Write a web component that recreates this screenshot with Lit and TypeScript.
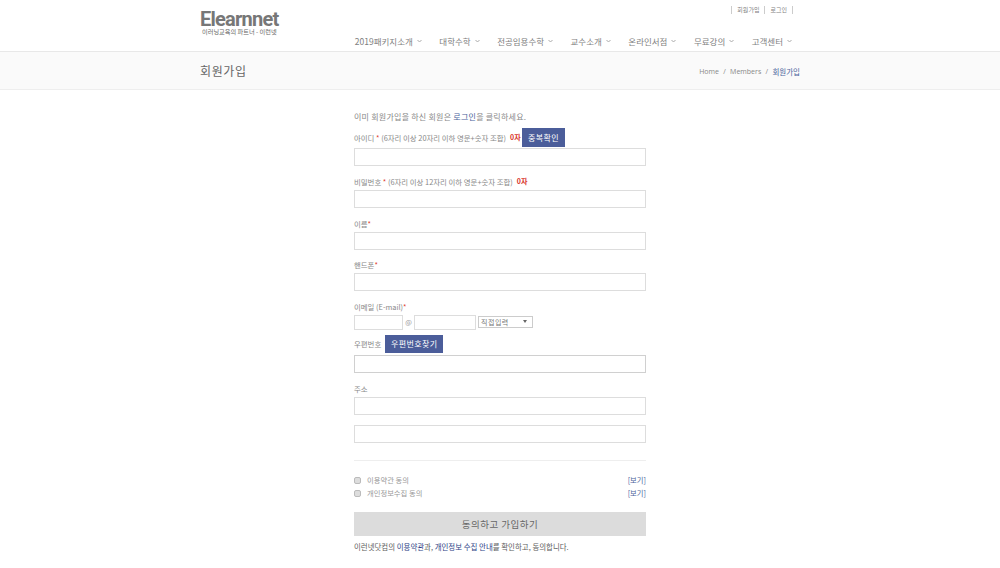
import { LitElement, html, css } from "lit";
import { customElement } from "lit/decorators.js";

@customElement("app-root")
export class AppRoot extends LitElement {
  static styles = css`
    :host { display: block; font-family: "Noto Sans CJK KR", "Open Sans", sans-serif; color: #777; background: #fff; height: 568px; overflow: hidden; }
    * { box-sizing: border-box; }
    .wrap { width: 600px; margin: 0 auto; }
    header { height: 52px; border-bottom: 1px solid #e8e8e8; }
    header .wrap { display: flex; justify-content: space-between; height: 51px; }
    .logo { padding-top: 10px; width: 80px; flex: none; }
    .logo b { display: block; font: bold 20px/18px Roboto, sans-serif; color: #777; letter-spacing: -0.75px; }
    .logo span { display: block; font-size: 6.2px; line-height: 8px; color: #666; white-space: nowrap; margin-left: 2px; }
    .right { display: flex; flex-direction: column; align-items: flex-end; }
    .util { display: flex; margin: 6px 7px 0 0; height: 8px; font-size: 6px; line-height: 8px; color: #808080; border-right: 1px solid #ccc; }
    .util span { padding: 0 5px; border-left: 1px solid #ccc; }
    nav { display: flex; gap: 17.5px; margin: 20px 8px 0 0; font-size: 8.5px; line-height: 14px; color: #808080; }
    nav span { display: flex; align-items: center; white-space: nowrap; }
    nav svg { width: 5px; height: 4px; margin-left: 4px; margin-bottom: 1px; fill: none; stroke: #aaa; stroke-width: 1; }
    .crumbbar { height: 38px; background: #fafafa; border-bottom: 1px solid #eee; }
    .crumbbar .wrap { display: flex; justify-content: space-between; align-items: center; height: 37px; }
    h1 { margin: 0; font-size: 12px; font-weight: 400; color: #666; letter-spacing: 0.6px; }
    .crumb { display: flex; align-items: center; gap: 4.3px; font: 7px "Open Sans", sans-serif; color: #888; padding-top: 2px; }
    .crumb em { font: normal 7.5px "Noto Sans CJK KR", sans-serif; color: #4a5f9a; }
    main { width: 292px; margin: 0 0 0 354px; padding-top: 21px; }
    .intro { font-size: 8px; line-height: 12px; color: #888; letter-spacing: 0.03em; height: 17.3px; }
    .intro a { color: #4a5f9a; }
    .lab { display: flex; align-items: center; font-size: 7.4px; color: #888; height: 13px; line-height: 13px; white-space: pre; }
    .lab .r { color: #e03a2c; }
    .lab .c { color: #d9332a; font-weight: 700; font-size: 7px; margin-left: 4px; }
    .btn { background: #4b5d9a; color: #fff; font-size: 8px; letter-spacing: 0.4px; height: 19px; display: flex; align-items: center; justify-content: center; }
    .inp { height: 18px; border: 1px solid #ddd; background: #fff; }
    .row { height: 20px; display: flex; align-items: flex-start; }
    .row .lab { height: 19px; width: 168px; flex: none; }
    .row .btn { width: 43px; }
    .field { margin-top: 8.67px; }
    .field .lab { margin-bottom: 2px; }
    .field .lab.tight { margin-bottom: 0; }
    .email { display: flex; align-items: center; height: 15px; margin-top: 2px; font-size: 7px; color: #999; }
    .email .inp { height: 15px; }
    .email .a { width: 49px; }
    .email .b { width: 62px; }
    .email .at { width: 11px; text-align: center; }
    .sel { width: 55px; height: 12px; margin-left: 2px; border: 1px solid #ccc; font-size: 7px; line-height: 10px; color: #777; display: flex; justify-content: space-between; padding: 0 5px 0 2px; letter-spacing: 0.5px; }
    .sel svg { width: 4px; height: 3px; margin-top: 3px; fill: #666; }
    .zip { display: flex; align-items: center; height: 18px; margin: 5px 0 2px; font-size: 7.4px; color: #888; }
    .zip .btn { width: 58px; height: 18px; margin-left: 4px; }
    .inp.dark { border-color: #d0d0d0; }
    .inp.gap { margin-top: 10px; }
    hr { border: 0; border-top: 1px solid #eee; margin: 17px 0 13px; }
    .chk { display: flex; align-items: center; height: 13px; font-size: 7.3px; color: #999; }
    .box { width: 7px; height: 7px; border: 1px solid #bbb; border-radius: 2px; background: #ddd; margin-right: 6px; }
    .chk a { margin-left: auto; color: #4a5f9a; }
    .submit { height: 24px; background: #dcdcdc; color: #666; font-size: 9.5px; letter-spacing: 0.5px; display: flex; align-items: center; justify-content: center; margin-top: 12.5px; }
    .note { font-size: 7.45px; line-height: 12px; margin-top: 4.5px; color: #5c5c5c; }
    .note a { color: #2d4285; }
  `;

  render() {
    const nav = ["2019패키지소개", "대학수학", "전공임용수학", "교수소개", "온라인서점", "무료강의", "고객센터"];
    return html`
      <header><div class="wrap">
        <div class="logo"><b>Elearnnet</b><span>이러닝교육의 파트너 - 이런넷</span></div>
        <div class="right">
          <div class="util"><span>회원가입</span><span>로그인</span></div>
          <nav>${nav.map((n) => html`<span>${n}<svg viewBox="0 0 5 4"><path d="M.5 1 2.5 3 4.500 1" /></svg></span>`)}</nav>
        </div>
      </div></header>
      <div class="crumbbar"><div class="wrap"><h1>회원가입</h1>
        <div class="crumb"><span>Home</span><span>/</span><span>Members</span><span>/</span><em>회원가입</em></div></div></div>
      <main>
        <div class="intro">이미 회원가입을 하신 회원은 <a>로그인</a>을 클릭하세요.</div>
        <div class="row"><div class="lab">아이디 <span class="r">*</span> (6자리 이상 20자리 이하 영문+숫자 조합)<span class="c">0자</span></div><div class="btn">중복확인</div></div>
        <div class="inp"></div>
        <div class="field"><div class="lab">비밀번호 <span class="r">*</span> (6자리 이상 12자리 이하 영문+숫자 조합)<span class="c">0자</span></div><div class="inp"></div></div>
        <div class="field"><div class="lab">이름<span class="r">*</span></div><div class="inp"></div></div>
        <div class="field"><div class="lab">핸드폰<span class="r">*</span></div><div class="inp"></div></div>
        <div class="field"><div class="lab tight">이메일 (E-mail)<span class="r">*</span></div>
          <div class="email"><div class="inp a"></div><span class="at">@</span><div class="inp b"></div><div class="sel"><span>직접입력</span><svg viewBox="0 0 4 3"><path d="M0 0h4L2 3z" /></svg></div></div></div>
        <div class="zip">우편번호<div class="btn">우편번호찾기</div></div>
        <div class="inp dark"></div>
        <div class="field"><div class="lab">주소</div><div class="inp"></div></div>
        <div class="inp gap"></div>
        <hr />
        <div class="chk"><span class="box"></span>이용약관 동의<a>[보기]</a></div>
        <div class="chk"><span class="box"></span>개인정보수집 동의<a>[보기]</a></div>
        <div class="submit">동의하고 가입하기</div>
        <div class="note">이런넷닷컴의 <a>이용약관</a>과, <a>개인정보 수집 안내</a>를 확인하고, 동의합니다.</div>
      </main>`;
  }
}
